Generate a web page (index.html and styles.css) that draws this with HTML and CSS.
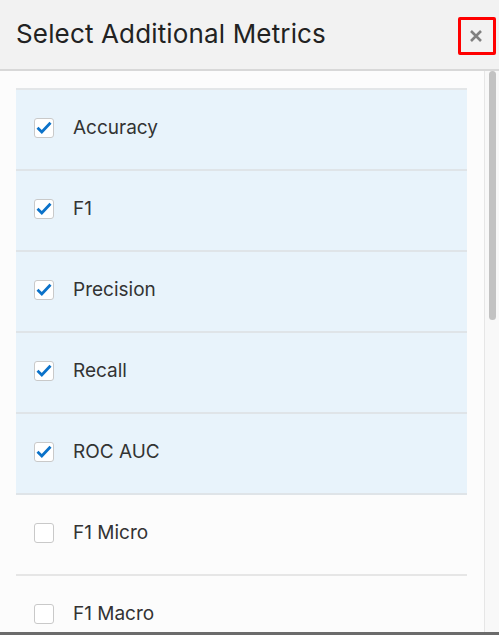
FILE: index.html
```html
<!DOCTYPE html>
<html lang="en">
<head>
<meta charset="utf-8">
<title>Select Additional Metrics</title>
<link rel="stylesheet" href="styles.css">
</head>
<body>
<div class="dialog">
  <header class="dialog-header">
    <h1 class="dialog-title">Select Additional Metrics</h1>
    <button class="close-btn" aria-label="Close">
      <svg width="14" height="14" viewBox="0 0 14 14"><path d="M2 2 L12 12 M12 2 L2 12" stroke="#808080" stroke-width="2.6" stroke-linecap="butt"/></svg>
    </button>
  </header>
  <div class="dialog-body">
    <div class="scroll-area">
      <ul class="metric-list">
        <li class="metric selected"><span class="box checked"><svg width="16" height="13" viewBox="0 0 16 13"><path d="M1.5 6.8 L5.8 11 L14.5 1.8" fill="none" stroke="#0b72c9" stroke-width="2.8" stroke-linejoin="miter"/></svg></span><span class="label">Accuracy</span></li>
        <li class="metric selected"><span class="box checked"><svg width="16" height="13" viewBox="0 0 16 13"><path d="M1.5 6.8 L5.8 11 L14.5 1.8" fill="none" stroke="#0b72c9" stroke-width="2.8" stroke-linejoin="miter"/></svg></span><span class="label">F1</span></li>
        <li class="metric selected"><span class="box checked"><svg width="16" height="13" viewBox="0 0 16 13"><path d="M1.5 6.8 L5.8 11 L14.5 1.8" fill="none" stroke="#0b72c9" stroke-width="2.8" stroke-linejoin="miter"/></svg></span><span class="label">Precision</span></li>
        <li class="metric selected"><span class="box checked"><svg width="16" height="13" viewBox="0 0 16 13"><path d="M1.5 6.8 L5.8 11 L14.5 1.8" fill="none" stroke="#0b72c9" stroke-width="2.8" stroke-linejoin="miter"/></svg></span><span class="label">Recall</span></li>
        <li class="metric selected"><span class="box checked"><svg width="16" height="13" viewBox="0 0 16 13"><path d="M1.5 6.8 L5.8 11 L14.5 1.8" fill="none" stroke="#0b72c9" stroke-width="2.8" stroke-linejoin="miter"/></svg></span><span class="label">ROC AUC</span></li>
        <li class="metric"><span class="box"></span><span class="label">F1 Micro</span></li>
        <li class="metric"><span class="box"></span><span class="label">F1 Macro</span></li>
      </ul>
    </div>
    <div class="scrollbar"><div class="thumb"></div></div>
  </div>
</div>
</body>
</html>
```

FILE: styles.css
```css
* { box-sizing: border-box; }
html, body {
  margin: 0;
  padding: 0;
  height: 100%;
  overflow: hidden;
}
body {
  font-family: Inter, "Liberation Sans", Arial, sans-serif;
  background: #fcfcfc;
  color: #333;
}
.dialog {
  height: 635px;
  display: flex;
  flex-direction: column;
  border-bottom: 3px solid #6b6b6b;
}
.dialog-header {
  height: 71px;
  flex: none;
  background: #f2f2f2;
  border-bottom: 2px solid #d8d8d8;
  display: flex;
  align-items: center;
  justify-content: space-between;
  padding: 0 3px 0 16px;
}
.dialog-title {
  margin: 0;
  font-size: 26px;
  font-weight: 400;
  color: #222;
  letter-spacing: 0.15px;
  padding-bottom: 2px;
}
.close-btn {
  width: 38px;
  height: 38px;
  border: 3px solid #ff0000;
  border-radius: 2px;
  background: transparent;
  padding: 0;
  display: flex;
  align-items: center;
  justify-content: center;
  margin-top: 2px;
  flex: none;
}
.close-btn svg { display: block; margin-left: -2px; }
.dialog-body {
  flex: 1;
  display: flex;
  min-height: 0;
}
.scroll-area {
  flex: 1;
  padding: 17px 17px 0 16px;
  overflow: hidden;
}
.metric-list {
  list-style: none;
  margin: 0;
  padding: 0;
  border-top: 2px solid #e3e6e8;
}
.metric {
  height: 81px;
  border-bottom: 2px solid #e6e6e6;
  display: flex;
  align-items: center;
  padding: 0 0 4px 18px;
}
.metric.selected {
  background: #e8f3fb;
  border-bottom-color: #dfe4e8;
}
.box {
  width: 20px;
  height: 20px;
  flex: none;
  border: 1px solid #c9c9c9;
  border-radius: 3px;
  background: #fff;
  display: flex;
  align-items: center;
  justify-content: center;
}
.label {
  margin-left: 19px;
  font-size: 19px;
  color: #333;
}
.scrollbar {
  width: 15px;
  flex: none;
  border-left: 1px solid #e6e6e6;
  background: #f8f8f8;
  padding: 0 3px 0 4px;
}
.thumb {
  width: 7px;
  height: 249px;
  background: #c2c2c2;
  border-radius: 4px;
}
```
